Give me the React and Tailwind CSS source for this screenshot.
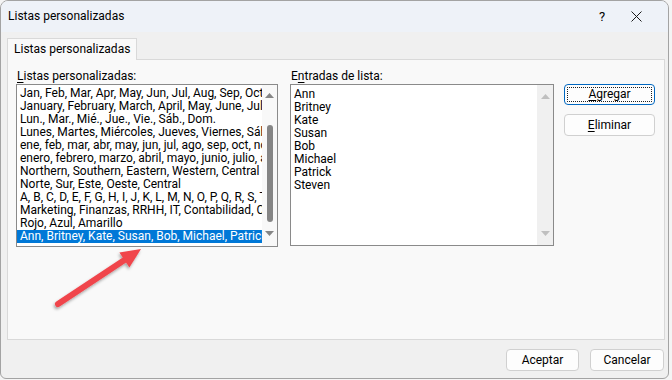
export default function App() {
  const left = [
    "Jan, Feb, Mar, Apr, May, Jun, Jul, Aug, Sep, Oct, Nov, Dec",
    "January, February, March, April, May, June, July, August, September, October, November, December",
    "Lun., Mar., Mié., Jue., Vie., Sáb., Dom.",
    "Lunes, Martes, Miércoles, Jueves, Viernes, Sábado, Domingo",
    "ene, feb, mar, abr, may, jun, jul, ago, sep, oct, nov, dic",
    "enero, febrero, marzo, abril, mayo, junio, julio, agosto, septiembre",
    "Northern, Southern, Eastern, Western, Central",
    "Norte, Sur, Este, Oeste, Central",
    "A, B, C, D, E, F, G, H, I, J, K, L, M, N, O, P, Q, R, S, T, U, V, W, X, Y, Z",
    "Marketing, Finanzas, RRHH, IT, Contabilidad, Compras",
    "Rojo, Azul, Amarillo",
    "Ann, Britney, Kate, Susan, Bob, Michael, Patrick, Steven",
  ];
  const right = ["Ann", "Britney", "Kate", "Susan", "Bob", "Michael", "Patrick", "Steven"];

  return (
    <div className="w-[672px] h-[380px] bg-[#f4f4f4] relative font-['Roboto','Liberation_Sans',sans-serif] text-[12px] text-black overflow-hidden">
      <div className="w-[669px] h-[379px] rounded-t-[8px] rounded-b-[6px] border border-[#a3a3a3] bg-[#f0f0f0] flex flex-col overflow-hidden relative">
        {/* Title bar */}
        <div className="h-[31px] shrink-0 bg-[#eef2f8] flex items-center pl-[7px]">
          <span className="flex-1 leading-[15px]">Listas personalizadas</span>
          <span className="w-[20px] text-center text-[13px] mr-[14px]">?</span>
          <span className="w-[20px] flex items-center justify-center mr-[22px]">
            <svg width="11" height="11" viewBox="0 0 11 11">
              <path d="M0.5 0.5 L10.5 10.5 M10.5 0.5 L0.5 10.5" stroke="#1a1a1a" strokeWidth="1" fill="none" />
            </svg>
          </span>
        </div>

        {/* Body */}
        <div className="flex-1 flex flex-col pl-[6px] pr-[3px]">
          <div className="flex mt-[6px]">
            <div className="h-[22px] px-[6px] border border-b-0 border-[#d9d9d9] bg-[#f9f9f9] flex items-center relative z-10 -mb-px leading-[15px]">
              Listas personalizadas
            </div>
          </div>
          <div className="h-[281px] border border-[#d9d9d9] bg-[#f9f9f9] flex pl-[8px] pt-[9px]">
            {/* Left column */}
            <div className="w-[262px] flex flex-col">
              <div className="h-[15px] leading-[15px] pl-[1px]">
                <span className="underline underline-offset-2">L</span>istas personalizadas:
              </div>
              <div className="h-[163px] border border-[#8a8a8a] bg-white flex">
                <div className="flex-1 min-w-0 pt-[2px] overflow-hidden">
                  {left.map((t, i) => (
                    <div
                      key={i}
                      className={
                        "h-[13px] leading-[13px] whitespace-nowrap overflow-hidden pl-[3px] " +
                        (i === left.length - 1 ? "bg-[#0078d7] text-white" : "")
                      }
                    >
                      {t}
                    </div>
                  ))}
                </div>
                <div className="w-[15px] shrink-0 bg-[#f8f8f8] flex flex-col items-center pt-[8px] pb-[10px]">
                  <svg width="9" height="5" viewBox="0 0 9 5">
                    <path d="M0 5 L4.5 0 L9 5 Z" fill="#858585" />
                  </svg>
                  <div className="flex-1 w-full flex justify-center py-[27px] pb-[4px]">
                    <div className="w-[6px] h-[97px] rounded-full bg-[#858585]" />
                  </div>
                  <svg width="9" height="5" viewBox="0 0 9 5">
                    <path d="M0 0 L9 0 L4.5 5 Z" fill="#858585" />
                  </svg>
                </div>
              </div>
            </div>

            {/* Right column */}
            <div className="w-[264px] flex flex-col ml-[12px]">
              <div className="h-[15px] leading-[15px] pl-[1px]">
                E<span className="underline underline-offset-2">n</span>tradas de lista:
              </div>
              <div className="h-[162px] border border-[#8a8a8a] bg-white flex">
                <div className="flex-1 min-w-0 pt-[3px] pl-[3px]">
                  {right.map((t) => (
                    <div key={t} className="h-[13px] leading-[13px] whitespace-nowrap">
                      {t}
                    </div>
                  ))}
                </div>
                <div className="w-[16px] shrink-0 bg-[#f0f0f0] flex flex-col items-center justify-between pt-[9px] pb-[9px]">
                  <svg width="9" height="5" viewBox="0 0 9 5">
                    <path d="M0 5 L4.5 0 L9 5 Z" fill="#bfbfbf" />
                  </svg>
                  <svg width="9" height="5" viewBox="0 0 9 5">
                    <path d="M0 0 L9 0 L4.5 5 Z" fill="#bfbfbf" />
                  </svg>
                </div>
              </div>
            </div>

            {/* Buttons */}
            <div className="w-[91px] flex flex-col ml-[10px] pt-[15px] gap-[9px]">
              <div className="h-[21px] rounded-[4px] border border-[#0067c0] bg-[#fdfdfd] relative flex items-center justify-center leading-[15px]">
                <span className="absolute inset-[2px] border border-dotted border-[#202020] rounded-[1px]" />
                <span><span className="underline underline-offset-2">A</span>gregar</span>
              </div>
              <div className="h-[22px] rounded-[4px] border border-[#d0d0d0] bg-[#fdfdfd] flex items-center justify-center leading-[15px]">
                <span><span className="underline underline-offset-2">E</span>liminar</span>
              </div>
            </div>
          </div>

          {/* Footer */}
          <div className="flex justify-end gap-[11px] mt-[9px] pr-[1px]">
            <div className="w-[73px] h-[22px] rounded-[4px] border border-[#d0d0d0] bg-[#fdfdfd] flex items-center justify-center leading-[15px]">
              Aceptar
            </div>
            <div className="w-[74px] h-[22px] rounded-[4px] border border-[#d0d0d0] bg-[#fdfdfd] flex items-center justify-center leading-[15px]">
              Cancelar
            </div>
          </div>
        </div>

        {/* Red annotation arrow */}
        <svg className="absolute left-0 top-0 pointer-events-none" width="669" height="379" viewBox="-1 -1 669 379">
          <defs>
            <filter id="sh" x="-20%" y="-20%" width="140%" height="140%">
              <feDropShadow dx="-1" dy="2" stdDeviation="1.5" floodColor="#000" floodOpacity="0.35" />
            </filter>
          </defs>
          <g filter="url(#sh)">
            <line x1="56" y1="302" x2="124" y2="257" stroke="#f0454b" strokeWidth="6" strokeLinecap="round" />
            <polygon points="139,247 117.4,250.6 127.4,265.6" fill="#f0454b" />
          </g>
        </svg>
      </div>
    </div>
  );
}
